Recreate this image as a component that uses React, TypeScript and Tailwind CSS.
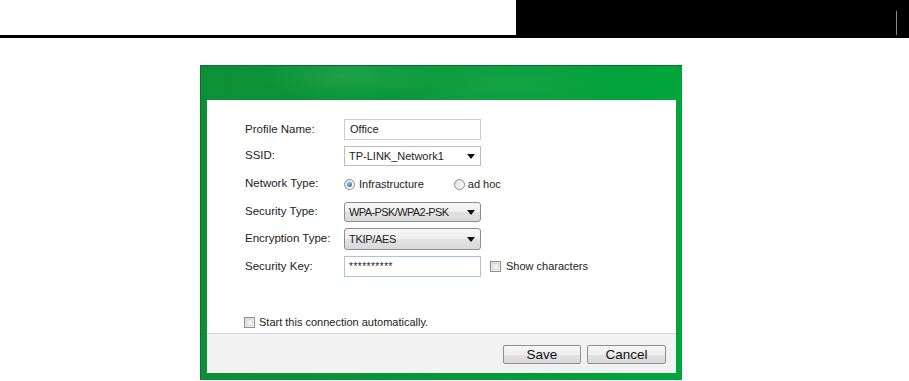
import React from "react";

const font = { fontFamily: '"Liberation Sans", Arial, sans-serif' };

function Arrow() {
  return (
    <svg width="8" height="5" viewBox="0 0 8 5" className="shrink-0">
      <path d="M0 0 H8 L4 5 Z" fill="#111" />
    </svg>
  );
}

function Radio({ checked }: { checked?: boolean }) {
  return (
    <span className="relative inline-flex h-[11px] w-[11px] shrink-0 items-center justify-center rounded-full border border-[#8c8c8c] bg-[linear-gradient(135deg,#dedede,#ffffff)]">
      {checked && (
        <span className="h-[5px] w-[5px] rounded-full bg-[radial-gradient(circle_at_35%_35%,#8ec3ea,#1d5c96)]" />
      )}
    </span>
  );
}

function Check() {
  return (
    <span className="inline-block h-[11px] w-[11px] shrink-0 border border-[#8f8f8f] bg-[linear-gradient(135deg,#dcdcdc,#f8f8f8)] p-px">
      <span className="block h-full w-full border border-[#d8d8d8] bg-[linear-gradient(135deg,#e4e4e4,#fafafa)]" />
    </span>
  );
}

function Label({ children }: { children: React.ReactNode }) {
  return <div className="w-[99px] shrink-0 whitespace-nowrap text-[11.5px] text-[#222]">{children}</div>;
}

export default function App() {
  return (
    <div className="h-[381px] w-[909px] overflow-hidden bg-white" style={font}>
      {/* page header */}
      <div className="flex h-[38px]">
        <div className="w-[516px] border-b-[3px] border-black" />
        <div className="flex flex-1 items-end justify-end bg-black pb-[3px] pr-[12px]">
          <div className="h-[24px] w-px bg-[#8a8a8a]" />
        </div>
      </div>

      <div className="pl-[200px] pt-[27px]">
        <div className="flex h-[315px] w-[482px] flex-col border-l border-t border-[#0f6f2c] bg-[radial-gradient(ellipse_90px_25px_at_150px_10px,rgba(120,210,140,0.2),transparent),radial-gradient(ellipse_120px_35px_at_300px_18px,rgba(110,200,130,0.15),transparent),linear-gradient(90deg,#0e8e38,#07983a_50%,#00a63c)] pb-[7px] pl-[6px] pr-[6px] pt-[34px]">
          <div className="flex flex-1 flex-col bg-white">
            {/* form */}
            <div className="flex h-[233px] flex-col pl-[38px] pt-[19px] text-[11px] text-[#222]">
              <div className="flex h-[21px] items-center">
                <Label>Profile Name:</Label>
                <div className="flex h-[21px] w-[137px] items-center border border-[#c9cbd0] bg-white pl-[5px]">Office</div>
              </div>
              <div className="mt-[6px] flex h-[20px] items-center">
                <Label>SSID:</Label>
                <div className="flex h-[20px] w-[137px] items-center justify-between border border-[#b9bcc2] bg-white pl-[4px] pr-[5px]">
                  <span className="whitespace-nowrap">TP-LINK_Network1</span>
                  <Arrow />
                </div>
              </div>
              <div className="mt-[6px] flex h-[24px] items-center">
                <Label>Network Type:</Label>
                <div className="flex items-center gap-[4px]">
                  <Radio checked />
                  <span>Infrastructure</span>
                </div>
                <div className="ml-[30px] flex items-center gap-[3px]">
                  <Radio />
                  <span>ad hoc</span>
                </div>
              </div>
              <div className="mt-[6px] flex h-[20px] items-center">
                <Label>Security Type:</Label>
                <div className="flex h-[20px] w-[137px] items-center justify-between rounded-[3px] border border-[#8b8d90] bg-[linear-gradient(#f6f6f6,#efefef_50%,#e2e2e2_51%,#d9d9d9)] pl-[4px] pr-[5px]">
                  <span className="whitespace-nowrap tracking-[-0.6px]">WPA-PSK/WPA2-PSK</span>
                  <Arrow />
                </div>
              </div>
              <div className="mt-[6px] flex h-[22px] items-center">
                <Label>Encryption Type:</Label>
                <div className="flex h-[22px] w-[137px] items-center justify-between rounded-[3px] border border-[#8b8d90] bg-[linear-gradient(#f6f6f6,#efefef_50%,#e2e2e2_51%,#d9d9d9)] pl-[4px] pr-[5px]">
                  <span className="tracking-[-0.3px]">TKIP/AES</span>
                  <Arrow />
                </div>
              </div>
              <div className="mt-[6px] flex h-[21px] items-center">
                <Label>Security Key:</Label>
                <div className="flex h-[21px] w-[137px] items-center border border-[#a9c3df] bg-white pl-[4px] text-[10px] tracking-[0.5px]">**********</div>
                <div className="ml-[9px] flex items-center gap-[5px]">
                  <Check />
                  <span>Show characters</span>
                </div>
              </div>
              <div className="-ml-px mb-[4px] mt-auto flex h-[14px] items-center gap-[4px]">
                <Check />
                <span>Start this connection automatically.</span>
              </div>
            </div>
            {/* footer */}
            <div className="flex flex-1 justify-end gap-[6px] border-t border-[#d6d6d6] bg-[#f2f2f2] pr-[10px] pt-[11px]">
              <button className="h-[19px] w-[78px] rounded-[2px] border border-[#8f8f8f] bg-[linear-gradient(#f6f6f6,#eeeeee_50%,#e2e2e2_51%,#dadada)] text-[13.5px] leading-none text-[#111]">
                Save
              </button>
              <button className="h-[19px] w-[79px] rounded-[2px] border border-[#8f8f8f] bg-[linear-gradient(#f6f6f6,#eeeeee_50%,#e2e2e2_51%,#dadada)] text-[13.5px] leading-none text-[#111]">
                Cancel
              </button>
            </div>
          </div>
        </div>
      </div>
    </div>
  );
}
